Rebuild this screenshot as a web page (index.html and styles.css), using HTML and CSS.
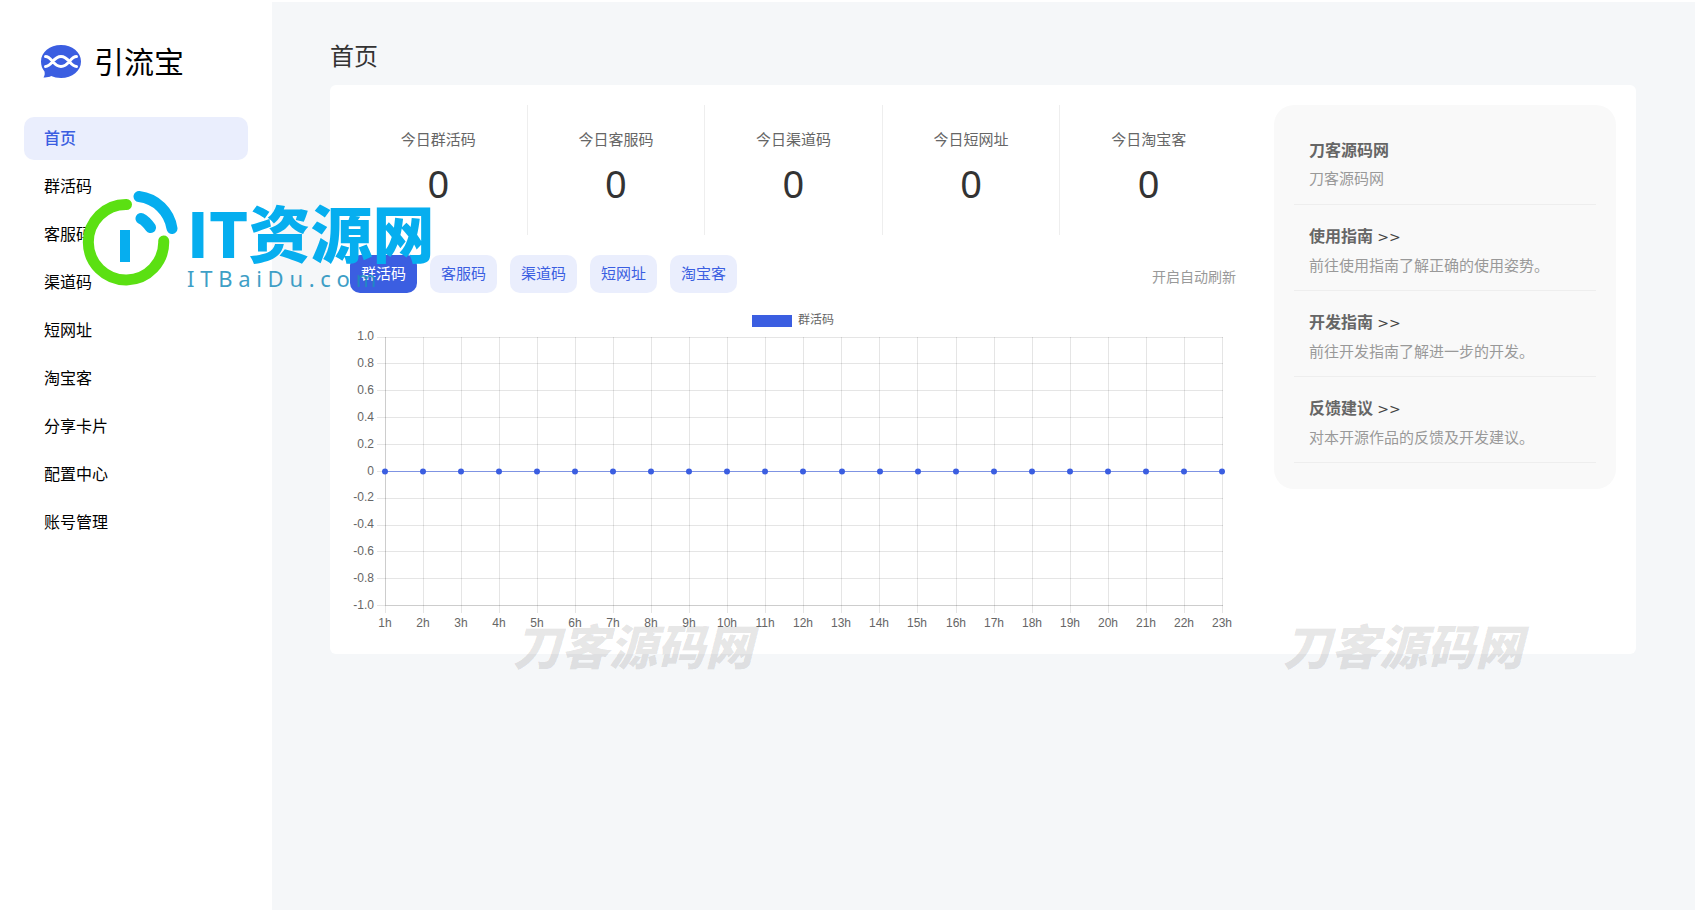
FILE: index.html
```html
<!DOCTYPE html>
<html lang="zh-CN">
<head>
<meta charset="utf-8">
<meta name="viewport" content="width=device-width, initial-scale=1">
<title>引流宝</title>
<link rel="stylesheet" href="styles.css">
</head>
<body>
<div class="layout">
  <aside class="sidebar">
    <div class="brand">
      <svg class="brand-icon" viewBox="0 0 40 33" aria-hidden="true">
        <path class="bubble" d="M20 0C31.300 0 40 7.200 40 16.500S31.300 33 20 33C16 33 13 32.200 10.200 31C8 32.200 5.500 32.600 2.500 32.400C3.700 30.600 4 28.800 3.500 26.500C1.200 23.700 0 20.500 0 16.500C0 7.200 8.700 0 20 0Z"/>
        <path class="strand" d="M4.500 11.500C11 11.500 12 21.500 20 21.500S29 11.500 35.500 11.500M4.500 21.500C11 21.500 12 11.500 20 11.500S29 21.500 35.500 21.500"/>
      </svg>
      <span class="brand-name">引流宝</span>
    </div>
    <nav class="menu">
      <a class="menu-item active" href="#">首页</a>
      <a class="menu-item" href="#">群活码</a>
      <a class="menu-item" href="#">客服码</a>
      <a class="menu-item" href="#">渠道码</a>
      <a class="menu-item" href="#">短网址</a>
      <a class="menu-item" href="#">淘宝客</a>
      <a class="menu-item" href="#">分享卡片</a>
      <a class="menu-item" href="#">配置中心</a>
      <a class="menu-item" href="#">账号管理</a>
    </nav>
  </aside>
  <main class="main">
    <h1 class="page-title">首页</h1>
    <div class="card">
      <section class="overview">
        <div class="stats">
          <div class="stat"><span class="stat-label">今日群活码</span><span class="stat-value">0</span></div>
          <div class="stat"><span class="stat-label">今日客服码</span><span class="stat-value">0</span></div>
          <div class="stat"><span class="stat-label">今日渠道码</span><span class="stat-value">0</span></div>
          <div class="stat"><span class="stat-label">今日短网址</span><span class="stat-value">0</span></div>
          <div class="stat"><span class="stat-label">今日淘宝客</span><span class="stat-value">0</span></div>
        </div>
        <div class="toolbar">
          <div class="tabs">
            <button class="tab selected" type="button">群活码</button>
            <button class="tab" type="button">客服码</button>
            <button class="tab" type="button">渠道码</button>
            <button class="tab" type="button">短网址</button>
            <button class="tab" type="button">淘宝客</button>
          </div>
          <button class="refresh" type="button">开启自动刷新</button>
        </div>
        <svg class="chart" viewBox="0 0 888 331" role="img" aria-label="群活码">
          <rect class="legend-box" x="402" y="12" width="40" height="12"/>
          <text class="label" x="448" y="21">群活码</text>
          <path class="grid" d="M27 34.500H873M27 60.500H873M27 87.500H873M27 114.500H873M27 141.500H873M27 168.500H873M27 195.500H873M27 222.500H873M27 248.500H873M27 275.500H873M27 302.500H873"/>
          <path class="grid" d="M35.500 34V310M73.500 34V310M111.500 34V310M149.500 34V310M187.500 34V310M225.500 34V310M263.500 34V310M301.500 34V310M339.500 34V310M377.500 34V310M415.500 34V310M453.500 34V310M491.500 34V310M529.500 34V310M567.500 34V310M606.500 34V310M644.500 34V310M682.500 34V310M720.500 34V310M758.500 34V310M796.500 34V310M834.500 34V310M872.500 34V310"/>
          <path class="grid" d="M35.500 34V302M35 302.500H873"/>
          <path class="series" d="M35 168.500H873"/>
          <path class="points" d="M35 168.500h0M73 168.500h0M111 168.500h0M149 168.500h0M187 168.500h0M225 168.500h0M263 168.500h0M301 168.500h0M339 168.500h0M377 168.500h0M415 168.500h0M453 168.500h0M492 168.500h0M530 168.500h0M568 168.500h0M606 168.500h0M644 168.500h0M682 168.500h0M720 168.500h0M758 168.500h0M796 168.500h0M834 168.500h0M872 168.500h0"/>
          <g class="label y-labels">
            <text x="24" y="37">1.0</text><text x="24" y="64">0.8</text><text x="24" y="91">0.6</text><text x="24" y="118">0.4</text><text x="24" y="145">0.2</text><text x="24" y="172">0</text><text x="24" y="198">-0.2</text><text x="24" y="225">-0.4</text><text x="24" y="252">-0.6</text><text x="24" y="279">-0.8</text><text x="24" y="306">-1.0</text>
          </g>
          <g class="label x-labels">
            <text x="35" y="324">1h</text><text x="73" y="324">2h</text><text x="111" y="324">3h</text><text x="149" y="324">4h</text><text x="187" y="324">5h</text><text x="225" y="324">6h</text><text x="263" y="324">7h</text><text x="301" y="324">8h</text><text x="339" y="324">9h</text><text x="377" y="324">10h</text><text x="415" y="324">11h</text><text x="453" y="324">12h</text><text x="491" y="324">13h</text><text x="529" y="324">14h</text><text x="567" y="324">15h</text><text x="606" y="324">16h</text><text x="644" y="324">17h</text><text x="682" y="324">18h</text><text x="720" y="324">19h</text><text x="758" y="324">20h</text><text x="796" y="324">21h</text><text x="834" y="324">22h</text><text x="872" y="324">23h</text>
          </g>
        </svg>
      </section>
      <aside class="links">
        <a class="link-item" href="#"><span class="link-title">刀客源码网</span><span class="link-text">刀客源码网</span></a>
        <a class="link-item" href="#"><span class="link-title">使用指南 <span class="arrows">&gt;&gt;</span></span><span class="link-text">前往使用指南了解正确的使用姿势。</span></a>
        <a class="link-item" href="#"><span class="link-title">开发指南 <span class="arrows">&gt;&gt;</span></span><span class="link-text">前往开发指南了解进一步的开发。</span></a>
        <a class="link-item" href="#"><span class="link-title">反馈建议 <span class="arrows">&gt;&gt;</span></span><span class="link-text">对本开源作品的反馈及开发建议。</span></a>
      </aside>
    </div>
  </main>
</div>
<div class="site-mark">
  <svg class="site-mark-icon" viewBox="0 0 96 96" aria-hidden="true">
    <path class="ring" d="M44.500 14.500A37.700 37.700 0 1 0 81.700 51"/>
    <path class="wave" d="M57 6.500A38 38 0 0 1 90 38.500M59 28.500C63 30.500 66 34 68.500 37.500"/>
    <path class="stem" d="M38 40h10v32h-10z"/>
  </svg>
  <div class="site-mark-words">
    <span class="site-mark-name">IT资源网</span>
    <span class="site-mark-url">I T B a i D u . c o m</span>
  </div>
</div>
<div class="stamp stamp-left">刀客源码网</div>
<div class="stamp stamp-right">刀客源码网</div>
</body>
</html>
```
FILE: styles.css
```css
* { box-sizing: border-box; }

body {
  margin: 0;
  position: relative;
  font-family: "Noto Sans", "Noto Sans CJK SC", sans-serif;
  color: #333;
  background: #fff;
}

a { color: inherit; text-decoration: none; }

button { font-family: inherit; border: 0; cursor: pointer; }

.layout {
  display: grid;
  grid-template-columns: 272px 1fr;
  min-height: 100vh;
  padding-top: 2px;
}

.sidebar { padding: 35px 24px; }

.brand {
  display: flex;
  align-items: center;
  gap: 13px;
  height: 48px;
  padding-left: 17px;
  margin-bottom: 32px;
}

.brand-icon { width: 40px; height: 33px; }
.bubble { fill: #3b5ee1; }
.strand { fill: none; stroke: #fff; stroke-width: 3; stroke-linecap: round; }
.brand-name {
  font-family: "Noto Sans CJK SC", sans-serif;
  font-size: 30px;
  font-weight: 400;
  line-height: 46px;
  padding-bottom: 2px;
  color: #000;
}

.menu { display: flex; flex-direction: column; gap: 5px; }

.menu-item {
  padding: 0 20px;
  border-radius: 10px;
  font-size: 16px;
  line-height: 43px;
  color: #000;
}

.menu-item.active { background: #eaeefd; color: #3b5ee1; font-weight: 500; }

.main { padding: 30px 59px 32px 58px; background: #f5f7f9; }

.page-title {
  margin: 0 0 5px;
  font-size: 24px;
  font-weight: 400;
  line-height: 48px;
}

.card {
  display: grid;
  grid-template-columns: 888fr 342fr;
  column-gap: 36px;
  align-items: start;
  padding: 20px;
  border-radius: 6px;
  background: #fff;
}

.stats { display: grid; grid-template-columns: repeat(5, 1fr); height: 130px; }

.stat {
  display: flex;
  flex-direction: column;
  align-items: center;
  padding-top: 20px;
  border-right: 1px solid #eee;
}

.stat:last-child { border-right-color: transparent; }
.stat-label { font-size: 15px; line-height: 28px; color: #666; }
.stat-value { font-size: 38px; line-height: 60px; }

.toolbar {
  display: flex;
  justify-content: space-between;
  align-items: flex-end;
  margin-top: 20px;
  padding-right: 2px;
}

.tabs { display: flex; gap: 13px; }

.tab {
  padding: 0 11px 2px;
  border-radius: 10px;
  font-size: 15px;
  line-height: 36px;
  background: #eaeefd;
  color: #3b5ee1;
}

.tab.selected { background: #3b5ee1; color: #fff; }

.refresh {
  padding: 0;
  background: none;
  font-size: 14px;
  line-height: 32px;
  color: #999;
}

.chart { display: block; width: 100%; margin-top: 10px; }
.legend-box { fill: #3b5ee1; }
.label {
  font-family: "Liberation Sans", "Noto Sans CJK SC", sans-serif;
  font-size: 12px;
  fill: #666;
}
.y-labels { text-anchor: end; }
.x-labels { text-anchor: middle; }
.grid { fill: none; stroke: #000; stroke-opacity: 0.1; }
.series { stroke: #3b5ee1; stroke-opacity: 0.6; }
.points { stroke: #3b5ee1; stroke-width: 6; stroke-linecap: round; }

.links {
  padding: 14px 20px 26px;
  border-radius: 20px;
  background: #f9f9f9;
}

.link-item {
  display: flex;
  flex-direction: column;
  height: 86px;
  padding: 16px 15px 0;
  border-bottom: 1px solid #eee;
}

.link-title { font-size: 16px; font-weight: 700; line-height: 30px; color: #666; }
.link-text { font-size: 15px; line-height: 26px; color: #999; }
.arrows { font-family: "DejaVu Sans", sans-serif; font-size: 14px; font-weight: 400; color: #444; }

/* Translucent marks laid over the page */
.site-mark {
  position: absolute;
  top: 190px;
  left: 82px;
  display: flex;
  gap: 9px;
  pointer-events: none;
}

.site-mark-icon { width: 96px; height: 96px; }
.ring, .wave { fill: none; stroke-width: 11; stroke-linecap: round; }
.ring { stroke: #5be012; }
.wave { stroke: #06aeef; }
.stem { fill: #06aeef; }
.site-mark-words { display: flex; flex-direction: column; padding-top: 6px; white-space: nowrap; }
.site-mark-name {
  font-family: "Noto Sans CJK SC", sans-serif;
  font-size: 62px;
  font-weight: 900;
  line-height: 70px;
  height: 66px;
  color: #06aeef;
}
.site-mark-url { font-size: 22px; line-height: 32px; color: #1c8fbd; opacity: 0.85; }

.stamp {
  position: absolute;
  top: 614px;
  font-family: "Noto Sans CJK SC", sans-serif;
  font-size: 48px;
  font-style: italic;
  font-weight: 900;
  line-height: 60px;
  color: rgba(0, 0, 0, 0.11);
  pointer-events: none;
}

.stamp-left { left: 513px; }
.stamp-right { left: 1283px; }
```
